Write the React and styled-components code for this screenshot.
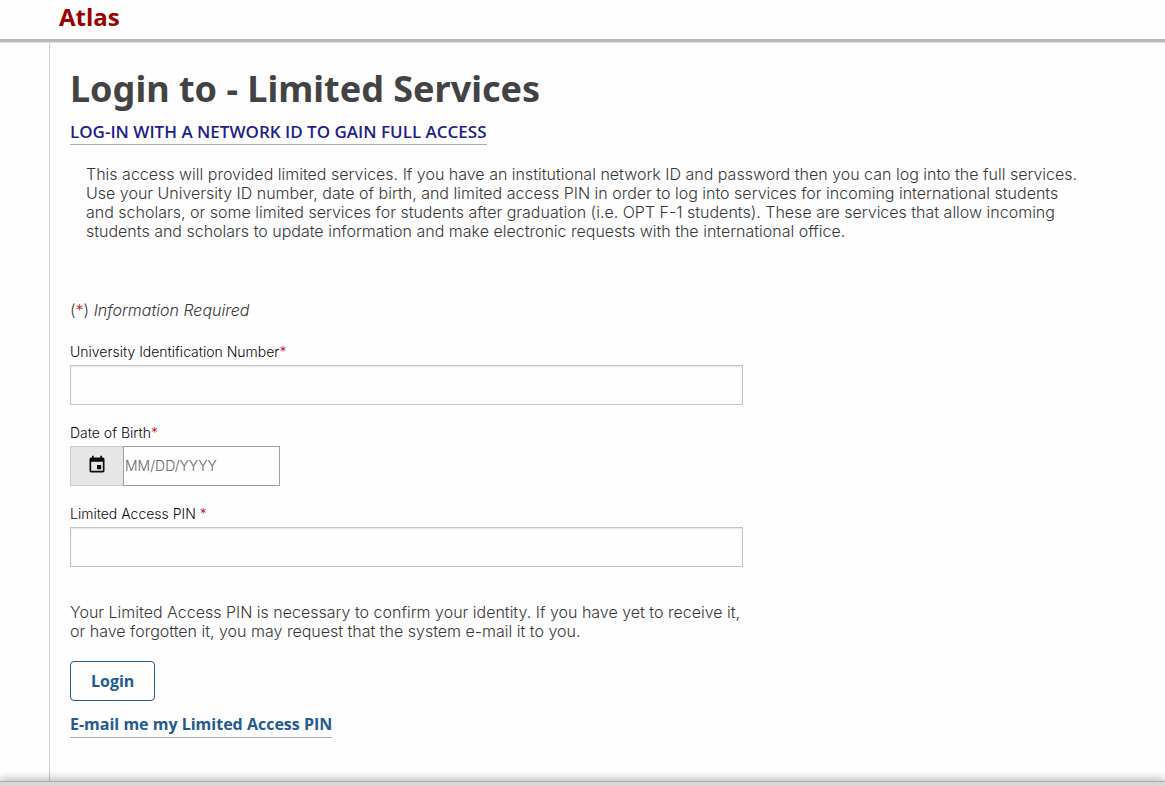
import React, { useState } from 'react'
import styled, { createGlobalStyle } from 'styled-components'
import { MdEvent } from 'react-icons/md'

const App = () => {
  const [universityId, setUniversityId] = useState('')
  const [birthDate, setBirthDate] = useState('')
  const [pin, setPin] = useState('')

  return (
    <Page>
      <GlobalStyle />
      <Header>
        <Brand>Atlas</Brand>
      </Header>
      <Content>
        <Title>Login to - Limited Services</Title>
        <NetworkLink href="#network-login">LOG-IN WITH A NETWORK ID TO GAIN FULL ACCESS</NetworkLink>
        <Intro>
          This access will provided limited services. If you have an institutional network ID and
          password then you can log into the full services. Use your University ID number, date of
          birth, and limited access PIN in order to log into services for incoming international
          students and scholars, or some limited services for students after graduation (i.e. OPT
          F-1 students). These are services that allow incoming students and scholars to update
          information and make electronic requests with the international office.
        </Intro>
        <Form onSubmit={(e) => e.preventDefault()}>
          <RequiredNote>
            (<Star>*</Star>) <em>Information Required</em>
          </RequiredNote>
          <Field>
            <Label htmlFor="university-id">University Identification Number<Star>*</Star></Label>
            <TextInput
              id="university-id"
              type="text"
              value={universityId}
              onChange={(e) => setUniversityId(e.target.value)}
            />
          </Field>
          <Field>
            <Label htmlFor="birth-date">Date of Birth<Star>*</Star></Label>
            <DateGroup>
              <DateButton type="button" aria-label="Open calendar">
                <MdEvent size={20} />
              </DateButton>
              <DateInput
                id="birth-date"
                type="text"
                placeholder="MM/DD/YYYY"
                value={birthDate}
                onChange={(e) => setBirthDate(e.target.value)}
              />
            </DateGroup>
          </Field>
          <Field>
            <Label htmlFor="pin">Limited Access PIN <Star>*</Star></Label>
            <TextInput
              id="pin"
              type="password"
              value={pin}
              onChange={(e) => setPin(e.target.value)}
            />
          </Field>
          <Help>
            Your Limited Access PIN is necessary to confirm your identity. If you have yet to
            receive it, or have forgotten it, you may request that the system e-mail it to you.
          </Help>
          <LoginButton type="submit">Login</LoginButton>
          <PinLink href="#email-pin">E-mail me my Limited Access PIN</PinLink>
        </Form>
      </Content>
      <Footer />
    </Page>
  )
}

const GlobalStyle = createGlobalStyle`
  * {
    box-sizing: border-box;
  }
  body {
    margin: 0;
    background: #fefefe;
    color: #383838;
    font-family: Inter, sans-serif;
    font-size: 16px;
    font-weight: 300;
    line-height: 19px;
  }
`

const Page = styled.div`
  display: flex;
  flex-direction: column;
  min-height: 100vh;
`

const Header = styled.header`
  padding: 1px 59px 6px;
  border-bottom: 3px solid #b9b9b9;
  box-shadow: 0 1px 0 #e3e3e3;
`

const Brand = styled.div`
  color: #990000;
  font-family: 'Open Sans', sans-serif;
  font-size: 24px;
  font-weight: 700;
  line-height: 32px;
`

const Content = styled.main`
  flex: 1;
  margin-left: 49px;
  padding: 23px 20px 40px;
  border-left: 1px solid #cccccc;
`

const Title = styled.h1`
  margin: 0 0 8px;
  color: #434343;
  font-family: 'Noto Sans', sans-serif;
  font-size: 36px;
  font-weight: 700;
  line-height: 48px;
`

const TextLink = styled.a`
  display: inline-block;
  padding-bottom: 2px;
  border-bottom: 1px solid #adadad;
  font-family: 'Open Sans', sans-serif;
  line-height: 21px;
  text-decoration: none;
`

const NetworkLink = styled(TextLink)`
  color: #1f1f8c;
  font-size: 17px;
  font-weight: 600;
`

const PinLink = styled(TextLink)`
  align-self: flex-start;
  color: #255a90;
  font-size: 16px;
  font-weight: 700;
`

const Intro = styled.p`
  margin: 20px 0 60px;
  padding: 0 16px;
  max-width: 1030px;
`

const Form = styled.form`
  display: flex;
  flex-direction: column;
  max-width: 673px;
`

const RequiredNote = styled.p`
  margin: 0 0 22px;
`

const Star = styled.span`
  color: #b3202a;
`

const Field = styled.div`
  display: flex;
  flex-direction: column;
  margin-bottom: 18px;
`

const Label = styled.label`
  margin-bottom: 4px;
  color: #0a0a0a;
  font-size: 14px;
`

const TextInput = styled.input`
  width: 100%;
  height: 40px;
  padding: 8px;
  border: 1px solid #c4c4c4;
  border-radius: 0;
  background: #fefefe;
  box-shadow: inset 0 1px 2px rgba(10, 10, 10, 0.1);
  font: inherit;
`

const DateGroup = styled.div`
  display: flex;
  width: 210px;
`

const DateButton = styled.button`
  display: flex;
  align-items: center;
  justify-content: center;
  width: 53px;
  height: 40px;
  padding: 0 0 3px;
  border: 1px solid #cacaca;
  border-right: 0;
  background: #e6e6e6;
  color: #0a0a0a;
  cursor: pointer;
`

const DateInput = styled.input`
  flex: 1;
  min-width: 0;
  height: 40px;
  padding: 0 1px 2px;
  border: 1px solid #a0a0a0;
  border-radius: 0;
  background: #fefefe;
  font: inherit;
  font-size: 14px;
  &::placeholder {
    color: #666666;
    opacity: 1;
  }
`

const Help = styled.p`
  margin: 18px 0 20px;
`

const LoginButton = styled.button`
  align-self: flex-start;
  height: 40px;
  margin-bottom: 13px;
  padding: 0 20px;
  border: 1px solid #255a90;
  border-radius: 4px;
  background: #fefefe;
  color: #255a90;
  font-family: 'Open Sans', sans-serif;
  font-size: 16px;
  font-weight: 700;
  cursor: pointer;
`

const Footer = styled.footer`
  height: 4px;
  background: #d9d6d3;
  box-shadow: 0 -1px 0 #acacac, 0 -2px 8px rgba(0, 0, 0, 0.5);
`

export default App
